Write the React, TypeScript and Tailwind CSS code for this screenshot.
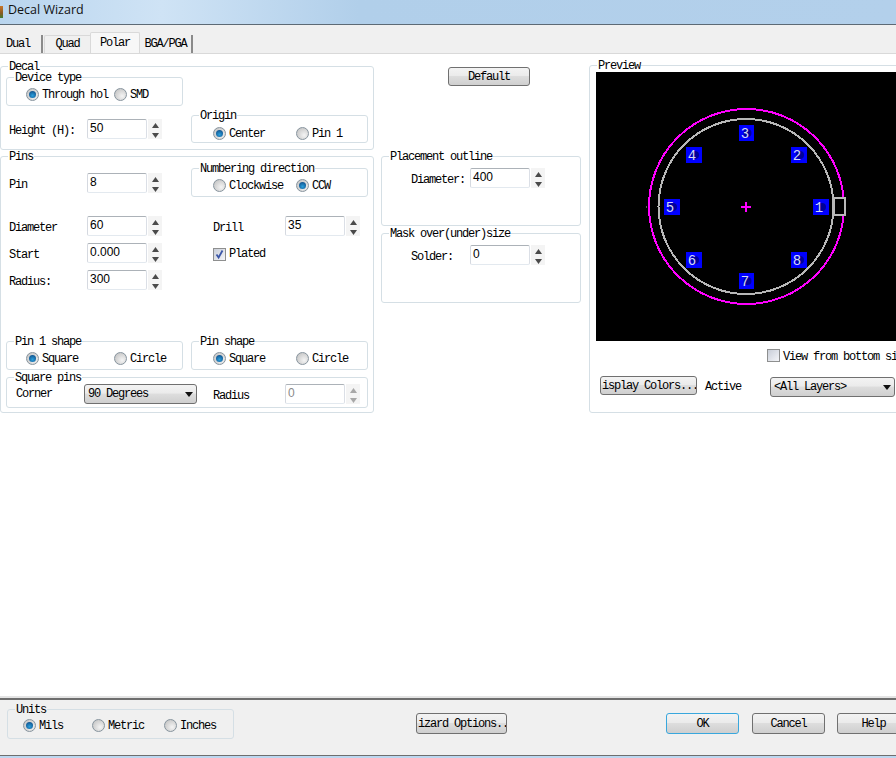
import type { ReactNode } from "react";

const mono = "font-['Liberation_Mono',monospace] text-[12px] tracking-[-1.2px] text-black";

function Group({ title, className, children }: { title: string; className?: string; children?: ReactNode }) {
  return (
    <div className={`relative box-border rounded-[3px] border border-[#d5dfe5] ${className ?? ""}`}>
      <span className={`absolute left-[7px] top-[-5px] bg-white px-[1px] leading-[11px] whitespace-nowrap ${mono}`}>{title}</span>
      {children}
    </div>
  );
}

function Radio({ label, checked, width }: { label: string; checked?: boolean; width: number }) {
  return (
    <div className="flex h-[13px] items-center gap-[3px]" style={{ width }}>
      <span className="flex h-[13px] w-[13px] shrink-0 items-center justify-center rounded-full border border-[#87949e] bg-[radial-gradient(circle_at_65%_65%,#f4f4f4,#bcbcbc)]">
        {checked && <span className="h-[7px] w-[7px] rounded-full bg-[radial-gradient(circle_at_50%_65%,#2a9fdc,#0a3f7a)]" />}
      </span>
      <span className={`whitespace-nowrap ${mono}`}>{label}</span>
    </div>
  );
}

function Spinner({ disabled }: { disabled?: boolean }) {
  const fill = disabled ? "#a8a8a8" : "#4a4a4a";
  return (
    <div className="flex h-[20px] w-[14px] flex-col items-center justify-between bg-[#f4f4f4] pt-[4px] pb-[1px]">
      <svg width="7" height="5" viewBox="0 0 7 5"><path d="M3.5 0L7 5H0z" fill={fill} /></svg>
      <svg width="7" height="5" viewBox="0 0 7 5"><path d="M0 0h7L3.5 5z" fill={fill} /></svg>
    </div>
  );
}

function NumberInput({ value, disabled }: { value: string; disabled?: boolean }) {
  return (
    <div className="flex gap-[1px]">
      <div
        className={`box-border h-[20px] w-[60px] rounded-[2px] border border-t-[#acb2b8] border-r-[#dbdfe6] border-b-[#e3e9ef] border-l-[#d5d9e0] bg-white pl-[2px] font-['Liberation_Sans',sans-serif] text-[12px] leading-[16px] ${disabled ? "text-[#8a8a8a]" : "text-black"}`}
      >
        {value}
      </div>
      <Spinner disabled={disabled} />
    </div>
  );
}

function Field({ label, value, labelWidth, disabled }: { label: string; value: string; labelWidth: number; disabled?: boolean }) {
  return (
    <div className="flex h-[20px] items-center">
      <span className={`whitespace-nowrap pt-[3px] leading-[14px] ${mono}`} style={{ width: labelWidth }}>{label}</span>
      <NumberInput value={value} disabled={disabled} />
    </div>
  );
}

function Button({ label, className, clipLeft }: { label: string; className: string; clipLeft?: boolean }) {
  return (
    <div
      className={`box-border flex shrink-0 items-center overflow-hidden rounded-[3px] border bg-[linear-gradient(#f3f3f3,#ebebeb_45%,#dddddd_50%,#cfcfcf)] whitespace-nowrap ${clipLeft ? "justify-start pl-[1px]" : "justify-center"} ${mono} ${className}`}
    >
      {label}
    </div>
  );
}

function Select({ label, className }: { label: string; className: string }) {
  return (
    <div className={`box-border flex shrink-0 items-center justify-between rounded-[3px] border border-[#707070] bg-[linear-gradient(#f3f3f3,#ebebeb_45%,#dddddd_50%,#cfcfcf)] pr-[3px] pl-[3px] ${mono} ${className}`}>
      <span className="whitespace-nowrap">{label}</span>
      <svg width="8" height="5" viewBox="0 0 8 5"><path d="M0 0h8L4 5z" fill="#111" /></svg>
    </div>
  );
}

function Check({ checked }: { checked?: boolean }) {
  return (
    <span className="flex h-[13px] w-[13px] shrink-0 items-center justify-center border border-[#8e8f8f] bg-[linear-gradient(135deg,#c9ced8,#f4f5f8)]">
      {checked && (
        <svg width="11" height="11" viewBox="0 0 11 11"><path d="M2.5 5.5L4.6 8.5L8.5 1.5" fill="none" stroke="#3c57a8" strokeWidth="1.8" /></svg>
      )}
    </span>
  );
}

const pads = [
  { n: "1", x: 217, y: 127, w: 16 },
  { n: "2", x: 195, y: 75, w: 16 },
  { n: "3", x: 143, y: 53, w: 15 },
  { n: "4", x: 90, y: 75, w: 16 },
  { n: "5", x: 68, y: 127, w: 16 },
  { n: "6", x: 90, y: 180, w: 16 },
  { n: "7", x: 143, y: 201, w: 15 },
  { n: "8", x: 195, y: 180, w: 16 },
];

function Preview() {
  return (
    <svg width="300" height="269" viewBox="0 0 300 269" className="block bg-black">
      <circle cx="150.5" cy="134.5" r="97.5" fill="none" stroke="#ff00ff" strokeWidth="2" shapeRendering="crispEdges" />
      <circle cx="150" cy="134.5" r="87.5" fill="none" stroke="#b8b8b8" strokeWidth="2" shapeRendering="crispEdges" />
      <path d="M50 135h1M62 135h1" stroke="#b8b8b8" />
      <path d="M145 135h10M150 130v10" stroke="#ff00ff" strokeWidth="2" />
      <rect x="238" y="126" width="11" height="17" fill="#000" stroke="#b8b8b8" strokeWidth="2" />
      {pads.map((p) => (
        <g key={p.n}>
          <rect x={p.x} y={p.y} width={p.w} height="16" fill="#0000ff" />
          <circle cx={p.x + p.w / 2 + 1} cy={p.y + 8} r="4" fill="#000099" />
          <text x={p.x + 6} y={p.y + 13} fontFamily="Liberation Mono, monospace" fontSize="14" fill="#d4d8f4" textAnchor="middle">
            {p.n}
          </text>
        </g>
      ))}
    </svg>
  );
}

export default function App() {
  return (
    <div className="flex h-[758px] w-[896px] flex-col overflow-hidden bg-white">
      {/* Title bar */}
      <div className="flex h-[25px] shrink-0 items-center border-b border-[#5d6a75] bg-[linear-gradient(90deg,#b9d5ee,#cfe3f5_18%,#b1cfea_40%,#b3d0eb)]">
        <span className="h-[12px] w-[3px] bg-[linear-gradient(#c8762a,#8a5a20_60%,#3f7d35)]" />
        <span className="mt-[-4px] ml-[5px] font-['Open_Sans',sans-serif] text-[12.5px] text-[#111]">Decal Wizard</span>
      </div>

      {/* Tabs */}
      <div className="flex h-[29px] shrink-0 items-end border-b border-[#d9d9d9] bg-[#f0f0f0]">
        <div className={`box-border flex h-[18px] w-[43px] items-center justify-start border-r-2 border-[#8a8a8a] bg-[#f0f0f0] pl-[6px] ${mono}`}>Dual</div>
        <div className={`ml-[1px] box-border flex h-[18px] w-[46px] items-center justify-center rounded-tl-[2px] border-t border-l border-[#d9d9d9] bg-[#f0f0f0] pb-[1px] ${mono}`}>Quad</div>
        <div className={`box-border flex h-[21px] w-[50px] items-start justify-center rounded-t-[2px] border border-b-0 border-[#d9d9d9] bg-[#f7f7f7] pt-[1px] ${mono}`}>Polar</div>
        <div className={`box-border flex h-[18px] w-[53px] items-center justify-center border-r-2 border-[#8a8a8a] bg-[#f0f0f0] ${mono}`}>BGA/PGA</div>
      </div>

      {/* Body */}
      <div className="flex min-h-0 flex-1">
        {/* Left column */}
        <div className="w-[374px] shrink-0 pt-[12px]">
          <Group title="Decal" className="h-[84px] w-[374px]">
            <div className="flex pt-[10px] pl-[5px]">
              <div className="w-[185px]">
                <Group title="Device type" className="h-[29px] w-[177px]">
                  <div className="flex pt-[10px] pl-[19px]">
                    <Radio label="Through hol" checked width={88} />
                    <Radio label="SMD" width={50} />
                  </div>
                </Group>
                <div className="mt-[13px] pl-[3px]">
                  <Field label="Height (H):" value="50" labelWidth={78} />
                </div>
              </div>
              <Group title="Origin" className="mt-[38px] h-[28px] w-[177px]">
                <div className="flex pt-[11px] pl-[21px]">
                  <Radio label="Center" checked width={83} />
                  <Radio label="Pin 1" width={60} />
                </div>
              </Group>
            </div>
          </Group>

          <Group title="Pins" className="mt-[6px] h-[257px] w-[374px]">
            <div className="flex pl-[5px]">
              <div className="w-[185px] pl-[3px]">
                <div className="mt-[16px]">
                  <Field label="Pin" value="8" labelWidth={78} />
                </div>
                <div className="mt-[23px] flex flex-col gap-[7px]">
                  <Field label="Diameter" value="60" labelWidth={78} />
                  <Field label="Start" value="0.000" labelWidth={78} />
                  <Field label="Radius:" value="300" labelWidth={78} />
                </div>
              </div>
              <div className="pt-[11px]">
                <Group title="Numbering direction" className="h-[29px] w-[177px]">
                  <div className="flex pt-[10px] pl-[21px]">
                    <Radio label="Clockwise" width={83} />
                    <Radio label="CCW" checked width={50} />
                  </div>
                </Group>
                <div className="mt-[19px] pl-[22px]">
                  <Field label="Drill" value="35" labelWidth={72} />
                  <div className="mt-[8px] flex h-[20px] items-center gap-[3px]">
                    <Check checked />
                    <span className={mono}>Plated</span>
                  </div>
                </div>
              </div>
            </div>
            <div className="mt-[51px] flex gap-[8px] pl-[5px]">
              <Group title="Pin 1 shape" className="h-[29px] w-[177px]">
                <div className="flex pt-[10px] pl-[19px]">
                  <Radio label="Square" checked width={88} />
                  <Radio label="Circle" width={60} />
                </div>
              </Group>
              <Group title="Pin shape" className="h-[29px] w-[177px]">
                <div className="flex pt-[10px] pl-[21px]">
                  <Radio label="Square" checked width={83} />
                  <Radio label="Circle" width={60} />
                </div>
              </Group>
            </div>
            <Group title="Square pins" className="mt-[7px] ml-[5px] h-[31px] w-[362px]">
              <div className="flex items-center pt-[6px] pl-[9px]">
                <span className={`w-[68px] ${mono}`}>Corner</span>
                <Select label="90 Degrees" className="h-[20px] w-[113px]" />
                <div className="ml-[16px]">
                  <Field label="Radius" value="0" labelWidth={72} disabled />
                </div>
              </div>
            </Group>
          </Group>
        </div>

        {/* Middle column */}
        <div className="ml-[7px] w-[200px] shrink-0 pt-[13px]">
          <Button label="Default" className="ml-[67px] h-[19px] w-[82px] border-[#707070]" />
          <Group title="Placement outline" className="mt-[70px] h-[70px] w-[200px]">
            <div className="pt-[11px] pl-[29px]">
              <Field label="Diameter:" value="400" labelWidth={59} />
            </div>
          </Group>
          <Group title="Mask over(under)size" className="mt-[7px] h-[70px] w-[200px]">
            <div className="pt-[11px] pl-[29px]">
              <Field label="Solder:" value="0" labelWidth={59} />
            </div>
          </Group>
        </div>

        {/* Preview */}
        <div className="ml-[8px] shrink-0 pt-[11px]">
          <Group title="Preview" className="h-[348px] w-[330px]">
            <div className="pt-[6px] pl-[6px]">
              <Preview />
              <div className="mt-[8px] ml-[171px] flex h-[13px] items-center gap-[3px]">
                <Check />
                <span className={`whitespace-nowrap pt-[2px] ${mono}`}>View from bottom si</span>
              </div>
              <div className="mt-[14px] ml-[4px] flex items-start">
                <Button label="isplay Colors..." clipLeft className="h-[19px] w-[97px] border-[#707070]" />
                <span className={`mt-[2px] ml-[8px] w-[65px] ${mono}`}>Active</span>
                <Select label="<All Layers>" className="mt-[1px] h-[20px] w-[125px]" />
              </div>
            </div>
          </Group>
        </div>
      </div>

      {/* Footer */}
      <div className="h-[2px] shrink-0 bg-[#e4e4e4]" />
      <div className="box-border flex h-[58px] shrink-0 border-t-2 border-b border-t-[#6e6e6e] border-b-[#6e6e6e] bg-[#f0f0f0] pt-[9px]">
        <div className="ml-[7px] w-[227px] shrink-0">
          <div className="relative box-border h-[30px] rounded-[3px] border border-[#d5dfe5]">
            <span className={`absolute left-[7px] top-[-5px] bg-[#f0f0f0] px-[1px] leading-[11px] ${mono}`}>Units</span>
            <div className="flex pt-[9px] pl-[15px]">
              <Radio label="Mils" checked width={69} />
              <Radio label="Metric" width={72} />
              <Radio label="Inches" width={60} />
            </div>
          </div>
        </div>
        <div className="ml-[182px] flex shrink-0 gap-[13px] pt-[4px]">
          <Button label="izard Options.." clipLeft className="h-[21px] w-[91px] border-[#707070]" />
          <Button label="OK" className="ml-[146px] h-[21px] w-[73px] border-[#39a7dd]" />
          <Button label="Cancel" className="h-[21px] w-[73px] border-[#707070]" />
          <Button label="Help" className="ml-[-1px] h-[21px] w-[73px] border-[#707070]" />
        </div>
      </div>
      <div className="h-[2px] shrink-0 bg-[#bcd7f0]" />
    </div>
  );
}
